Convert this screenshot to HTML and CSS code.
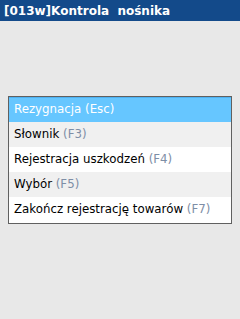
FILE: index.html
```html
<!DOCTYPE html>
<html lang="pl">
<head>
    <meta charset="UTF-8">
    <meta name="viewport" content="width=device-width, initial-scale=1.0">
    <title>Kontrola nośnika</title>
    <link rel="stylesheet" href="styles.css">
</head>
<body>

<div class="title-bar">[013w]Kontrola&nbsp; nośnika</div>

<div class="content">
    <div class="menu">
        <div class="menu-item selected">Rezygnacja <span class="key">(Esc)</span></div>
        <div class="menu-item alt">Słownik <span class="key">(F3)</span></div>
        <div class="menu-item">Rejestracja uszkodzeń <span class="key">(F4)</span></div>
        <div class="menu-item alt">Wybór <span class="key">(F5)</span></div>
        <div class="menu-item">Zakończ&nbsp;rejestrację towarów <span class="key">(F7)</span></div>
    </div>
</div>

</body>
</html>
```

FILE: styles.css
```css
body {
    margin: 0;
    width: 240px;
    height: 319px;
    background-color: #e8e8e8;
    font-family: Tahoma, "DejaVu Sans", sans-serif;
}
.title-bar {
    height: 21px;
    line-height: 22px;
    padding-left: 4px;
    background-color: #134a8a;
    color: #fff;
    font-size: 12px;
    font-weight: bold;
    white-space: nowrap;
}
.content {
    padding: 75px 8px 0 8px;
}
.menu {
    border: 1px solid #606060;
    background-color: #fff;
    padding-bottom: 1px;
}
.menu-item {
    height: 25px;
    line-height: 25px;
    padding-left: 5px;
    font-size: 11.8px;
    color: #000;
    white-space: nowrap;
}
.menu-item.alt {
    background-color: #f0f0f0;
}
.menu-item.selected {
    background-color: #66c6ff;
    border-top: 1px solid #4eb2f2;
    height: 24px;
    line-height: 23px;
    color: #fff;
}
.menu-item .key {
    color: #7e8ea6;
}
.menu-item.selected .key {
    color: #fff;
}
```
